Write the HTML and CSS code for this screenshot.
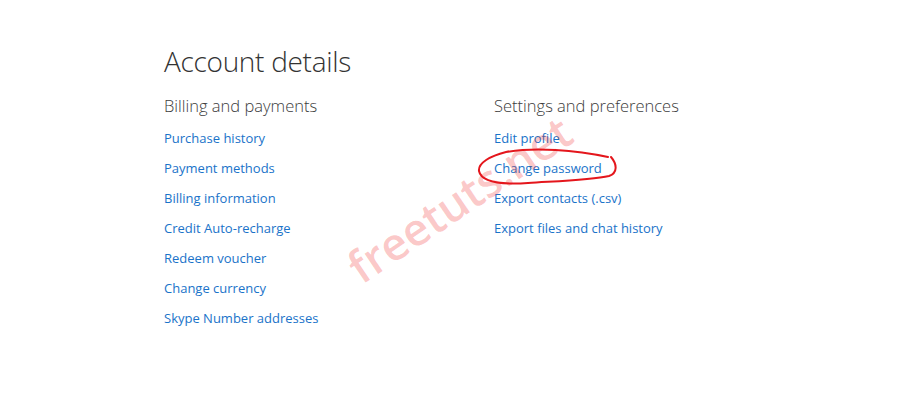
FILE: index.html
```html
<!DOCTYPE html>
<html>
<head>
<meta charset="utf-8">
<link rel="stylesheet" href="styles.css">
</head>
<body>
<main class="page">
  <h1 class="title">Account details</h1>
  <div class="columns">
    <section class="col">
      <h2 class="sub">Billing and payments</h2>
      <ul class="links">
        <li><a href="#">Purchase history</a></li>
        <li><a href="#">Payment methods</a></li>
        <li><a href="#">Billing information</a></li>
        <li><a href="#">Credit Auto-recharge</a></li>
        <li><a href="#">Redeem voucher</a></li>
        <li><a href="#">Change currency</a></li>
        <li><a href="#">Skype Number addresses</a></li>
      </ul>
    </section>
    <section class="col">
      <h2 class="sub">Settings and preferences</h2>
      <ul class="links">
        <li><a href="#">Edit profile</a></li>
        <li><a href="#">Change password</a></li>
        <li><a href="#">Export contacts (.csv)</a></li>
        <li><a href="#">Export files and chat history</a></li>
      </ul>
    </section>
  </div>
</main>
<div class="watermark">freetuts.net</div>
<svg class="circle" width="907" height="416" viewBox="0 0 907 416">
  <path d="M608 157 C 575 150, 535 147, 506 152 C 490 156, 478 163, 479 171 C 481 181, 498 185, 528 183 C 560 181, 592 180, 609 176 C 618 173, 617 164, 611 157" fill="none" stroke="#e4161c" stroke-width="2" stroke-linecap="round"/>
</svg>
</body>
</html>
```
FILE: styles.css
```css
html, body {
  margin: 0;
  padding: 0;
  background: #ffffff;
}
body {
  width: 907px;
  height: 416px;
  overflow: hidden;
  position: relative;
  font-family: "Open Sans", "Noto Sans", sans-serif;
}
.page {
  padding: 41px 0 0 164px;
}
.title {
  margin: 0;
  font-weight: 300;
  font-size: 28px;
  line-height: 40px;
  color: #333333;
  letter-spacing: -0.3px;
}
.columns {
  display: flex;
  margin-top: 12px;
}
.col {
  width: 330px;
}
.sub {
  margin: 0 0 9px;
  font-weight: 300;
  font-size: 16.5px;
  line-height: 26px;
  color: #3c3c3c;
}
.links {
  list-style: none;
  margin: 0;
  padding: 0;
}
.links li {
  height: 30px;
  line-height: 20px;
  font-size: 13px;
}
.links a {
  color: #1a73c9;
  text-decoration: none;
}
.watermark {
  position: absolute;
  left: 330px;
  top: 168px;
  font-family: "Open Sans", sans-serif;
  font-weight: 600;
  font-size: 45px;
  color: rgba(240, 40, 40, 0.26);
  transform: rotate(-34deg);
  transform-origin: center;
}
.circle {
  position: absolute;
  left: 0;
  top: 0;
  pointer-events: none;
}
```
